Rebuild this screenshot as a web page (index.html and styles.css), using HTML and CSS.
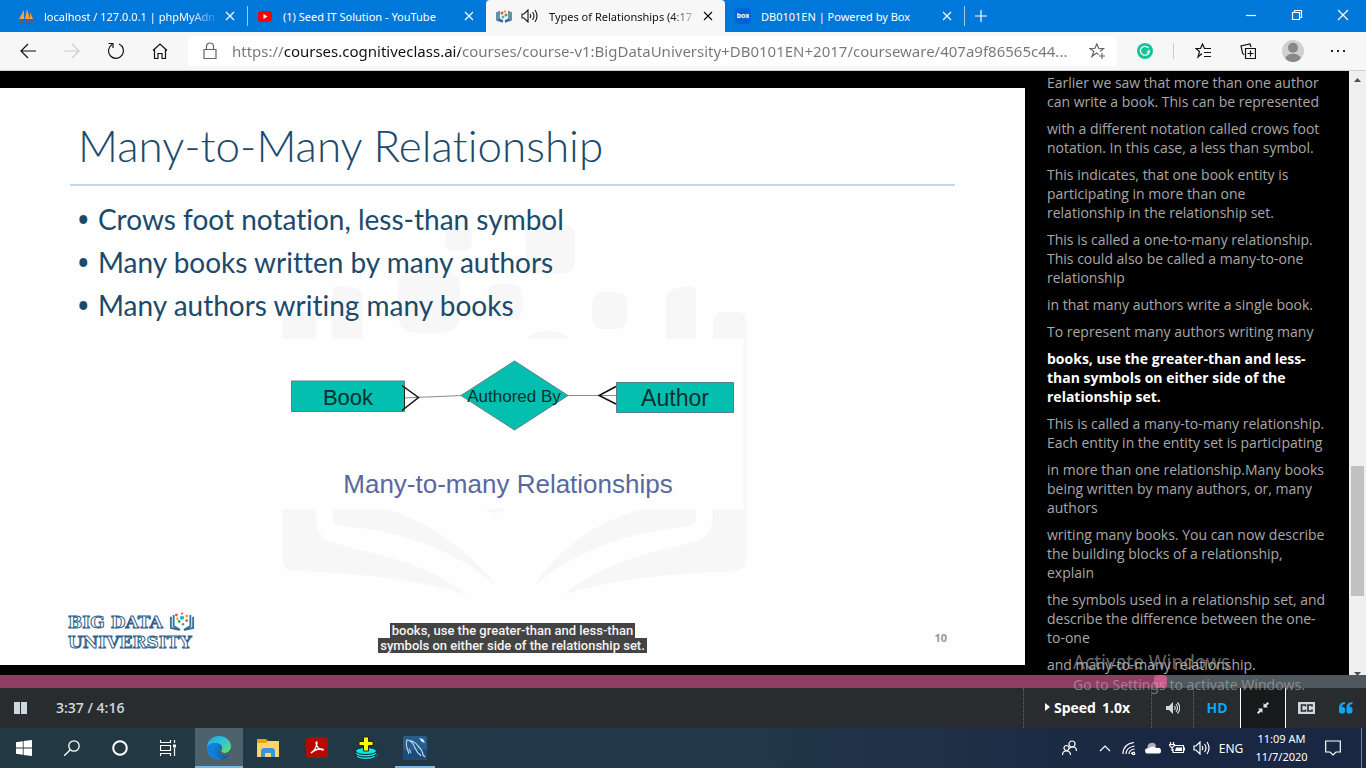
FILE: index.html
```html
<!DOCTYPE html>
<html lang="en">
<head>
<meta charset="utf-8">
<title>Types of Relationships (4:17)</title>
<link rel="stylesheet" href="styles.css">
</head>
<body>
<header class="tabstrip">
  <div class="tab">
    <svg class="favicon" viewBox="0 0 16 16" width="16" height="16"><path d="M1 11 6 2v9zM7 11 9 1l3 10zM12 11V4l3 7z" fill="#f5a33a"/><path d="M1 12.500h14M1.500 14.500h13" stroke="#565a86" stroke-width="1.500" stroke-dasharray="2 1" fill="none"/></svg>
    <button class="tab-title fade">localhost / 127.0.0.1 | phpMyAdn</button>
    <button class="tab-close" aria-label="Close tab"><svg viewBox="0 0 10 10" width="10" height="10"><path d="M1 1l8 8M9 1l-8 8"/></svg></button>
  </div>
  <div class="tab divided">
    <svg class="favicon" viewBox="0 0 16 16" width="16" height="16"><rect x="1" y="3" width="14" height="11" rx="3" fill="#f00"/><path d="M6.500 6v5l4-2.500z" fill="#fff"/></svg>
    <button class="tab-title">(1) Seed IT Solution - YouTube</button>
    <button class="tab-close" aria-label="Close tab"><svg viewBox="0 0 10 10" width="10" height="10"><path d="M1 1l8 8M9 1l-8 8"/></svg></button>
  </div>
  <div class="tab active">
    <svg class="favicon" viewBox="0 0 16 16" width="16" height="16"><path d="M1 4v8l6 2M15 4v8l-6 2M3 3v8l4 2M13 3v8l-4 2" stroke="#3a6f92" stroke-width="1.500" fill="none"/><circle cx="6" cy="5" r="1.500" fill="#e2574c"/><circle cx="9" cy="3.500" r="1.300" fill="#f0a33a"/><circle cx="10" cy="7" r="1.500" fill="#45a85c"/><circle cx="7" cy="9" r="1.500" fill="#3fb6c8"/></svg>
    <svg class="sound" viewBox="0 0 18 14" width="18" height="14"><path d="M1 5h2l4-4v12l-4-4H1zM9 5q1.500 2 0 4M11.500 3q3 4 0 8M14 1q4 6 0 12" fill="none" stroke="#222" stroke-width="1.200"/></svg>
    <button class="tab-title fade">Types of Relationships (4:17</button>
    <button class="tab-close" aria-label="Close tab"><svg viewBox="0 0 10 10" width="10" height="10"><path d="M1 1l8 8M9 1l-8 8"/></svg></button>
  </div>
  <div class="tab">
    <span class="favicon box">box</span>
    <button class="tab-title">DB0101EN | Powered by Box</button>
    <button class="tab-close" aria-label="Close tab"><svg viewBox="0 0 10 10" width="10" height="10"><path d="M1 1l8 8M9 1l-8 8"/></svg></button>
  </div>
  <button class="new-tab divided" aria-label="New tab"><svg viewBox="0 0 14 14" width="14" height="14"><path d="M7 1v12M1 7h12"/></svg></button>
  <div class="window-buttons">
    <button aria-label="Minimize"><svg viewBox="0 0 12 12" width="12" height="12"><path d="M1 6.500h10"/></svg></button>
    <button aria-label="Restore"><svg viewBox="0 0 12 12" width="12" height="12"><path d="M1.500 3.500h7v7h-7zM3.500 3V1.500h7v7H9"/></svg></button>
    <button aria-label="Close window"><svg viewBox="0 0 12 12" width="12" height="12"><path d="M1 1l10 10M11 1L1 11"/></svg></button>
  </div>
</header>

<nav class="toolbar">
  <div class="nav-buttons">
    <button aria-label="Back"><svg viewBox="0 0 16 16" width="16" height="16"><path d="M16 8H1M8 1 1 8l7 7"/></svg></button>
    <button class="disabled" aria-label="Forward" disabled><svg viewBox="0 0 16 16" width="16" height="16"><path d="M0 8h15M8 1l7 7-7 7"/></svg></button>
    <button aria-label="Reload"><svg viewBox="0 0 18 18" width="18" height="18"><path d="M5 2.500A7.500 7.500 0 1 0 12 2M1.500 1.500H6V6"/></svg></button>
    <button aria-label="Home"><svg viewBox="0 0 16 16" width="16" height="16"><path d="M1 7.500 8 1l7 6.500M2.500 6.500v9H6v-5h4v5h3.500v-9"/></svg></button>
  </div>
  <div class="address">
    <svg class="lock" viewBox="0 0 14 18" width="14" height="18"><path d="M1 7.500h12v9H1zM3.500 7V4.500a3.500 3.500 0 0 1 7 0V7"/></svg>
    <input class="url" type="text" aria-label="Address" value="https://courses.cognitiveclass.ai/courses/course-v1:BigDataUniversity+DB0101EN+2017/courseware/407a9f86565c44...">
    <button class="star" aria-label="Add to favorites"><svg viewBox="0 0 17 16" width="17" height="16"><path d="M9.500 11.500 7.500 10 3 13.500 4.800 8.500 1 5.500h4.800l2-4.500 2 4.500h4.700L11 8.500M10 13h6M13 10v6"/></svg></button>
  </div>
  <div class="toolbar-actions">
    <button aria-label="Grammarly"><svg viewBox="0 0 16 16" width="16" height="16"><circle cx="8" cy="8" r="8" fill="#15c39a" stroke="none"/><path d="M11.500 5A4.500 4.500 0 1 0 12.300 9H9.500M12 6.500V9" stroke="#fff" stroke-width="1.500"/></svg></button>
    <button class="split" aria-label="Favorites"><svg viewBox="0 0 17 16" width="17" height="16"><path d="M7 10.500 3 14l1.500-5.500L1 5.500h4.500L7.500 1l2 4.500H16M9 9.500h7M9 13.500h7"/></svg></button>
    <button aria-label="Collections"><svg viewBox="0 0 16 16" width="16" height="16"><path d="M5.500 5.500h10v10h-10zM10.500 7.500v6M7.500 10.500h6M4 12 2.500 10 1 3l9-2 1 3"/></svg></button>
    <button aria-label="Profile"><svg viewBox="0 0 24 24" width="22" height="22"><circle cx="12" cy="12" r="12" fill="#d2d0ce" stroke="none"/><circle cx="12" cy="8.500" r="5.500" fill="#8a8886" stroke="none"/><path d="M3.500 20q2-5 8.500-5t8.500 5q-3 4-8.500 4t-8.500-4z" fill="#8a8886" stroke="none"/></svg></button>
    <button aria-label="Settings and more"><svg viewBox="0 0 16 4" width="16" height="4"><path d="M1 1h2v2H1zM7 1h2v2H7zM13 1h2v2h-2z" fill="#222" stroke="none"/></svg></button>
  </div>
</nav>

<main class="player">
  <section class="stage">
    <article class="slide">
      <svg class="watermark" viewBox="0 0 1500 1200" width="500" height="400" aria-hidden="true">
        <g fill="#f7f7f7">
          <rect x="527" y="45" width="78" height="78" rx="22"/><rect x="768" y="43" width="147" height="148" rx="34"/><rect x="384" y="180" width="186" height="188" rx="50"/><rect x="652" y="223" width="103" height="105" rx="25"/><rect x="966" y="247" width="106" height="110" rx="34"/>
          <path d="M38 387V320q0-12 25-14h50q24 4 24 20v61zM187 387V245q0-17 20-16l45 5q25 5 25 20v133zM1188 387V262q2-20 28-26l42-8q20 0 20 17v142zM1330 387v-54q4-24 26-27l47-1q24 3 24 27v565h-7V387zM770 387q20-24 65-24t62 24zM645 897h60q-15 12-30 12t-30-12z"/>
          <path d="M38 894h99v30q4 68 60 76 35 12 90 24 190 42 305 130-200-62-525-72-29-5-29-30zM188 894h145q200 50 350 236Q500 970 215 948q-27-5-27-25zM1427 894h-99v30q-4 60-50 68-35 14-105 28-195 50-293 134 200-62 515-70 32-6 32-30zM1278 894h-145q-220 52-343 235 170-150 460-180 28-6 28-28z"/>
        </g>
      </svg>
      <h1 class="slide-title">Many-to-Many Relationship</h1>
      <ul class="bullets">
        <li>Crows foot notation, less-than symbol</li>
        <li>Many books written by many authors</li>
        <li>Many authors writing many books</li>
      </ul>
      <svg class="diagram" viewBox="282 339 461 170" width="461" height="170" role="img" aria-label="Book, Authored By, Author">
        <rect x="282" y="339" width="461" height="170" fill="#fefefe"/>
        <path d="M403 398 462 395.500M567 395.500h50" stroke="#8d8a9c" stroke-width="1.200"/>
        <g fill="#03bfb0" stroke="#59808a"><path d="M291.500 381h113v30.500h-113zM616.500 382.500h117v30h-117zM461 395.500 514.500 361 568 395.500 514.500 430z"/></g>
        <path d="M402 385.500 418.500 397.500 402 410.500M616 386.500 599 395.500 616 404" fill="none" stroke="#111" stroke-width="1.500"/>
        <path d="M404.500 387v21" stroke="#222"/>
        <g class="diagram-text" text-anchor="middle"><text x="348" y="405" font-size="22">Book</text><text x="514" y="402" font-size="17">Authored By</text><text x="675" y="406" font-size="23">Author</text></g>
        <text class="diagram-caption" x="508" y="493" font-size="26" text-anchor="middle">Many-to-many Relationships</text>
      </svg>
      <footer class="slide-footer">
        <div class="logo">
          <span class="logo-line">BIG DATA
          <svg viewBox="0 0 28 20" width="26" height="19"><path d="M2 5v12l9 2M5 3v12l7 4M26 5v12l-9 2M23 3v12l-7 4" stroke="#34729c" stroke-width="2" fill="none"/><g fill="#e2574c"><circle cx="8" cy="3" r="1.500"/><circle cx="14" cy="1.500" r="1.200"/><circle cx="19" cy="9" r="1.500"/></g><g fill="#f0a33a"><circle cx="19" cy="4" r="1.600"/><circle cx="9" cy="7" r="1.300"/></g><g fill="#3aa655"><circle cx="11" cy="10" r="1.500"/><circle cx="15" cy="13" r="1.300"/></g><circle cx="14" cy="6" r="2.300" fill="#30b3cf"/></svg></span>
          <span class="logo-line">UNIVERSITY</span>
        </div>
        <p class="subtitle"><span>books, use the greater-than and less-than<br>symbols on either side of the relationship set.</span></p>
        <span class="page-number">10</span>
      </footer>
    </article>
  </section>
  <aside class="transcript">
    <ol>
      <li>Earlier we saw that more than one author can write a book. This can be represented</li>
      <li>with a different notation called crows foot notation. In this case, a less than symbol.</li>
      <li>This indicates, that one book entity is participating in more than one<br>relationship in the relationship set.</li>
      <li>This is called a one-to-many relationship. This could also be called a many-to-one relationship</li>
      <li>in that many authors write a single book.</li>
      <li>To represent many authors writing many</li>
      <li class="current">books, use the greater-than and less-than symbols on either side of the relationship set.</li>
      <li>This is called a many-to-many relationship. Each entity in the entity set is participating</li>
      <li>in more than one relationship.Many books being written by many authors, or, many authors</li>
      <li>writing many books. You can now describe the building blocks of a relationship, explain</li>
      <li>the symbols used in a relationship set, and describe the difference between the one-to-one</li>
      <li>and many-to-many relationship.</li>
    </ol>
  </aside>
  <div class="scrollbar" aria-hidden="true">
    <svg viewBox="0 0 17 17" width="17" height="17"><path d="M5 11l3.500-4 3.500 4z" fill="#505050"/></svg>
    <span></span><span class="scroll-thumb"></span><span></span>
    <svg viewBox="0 0 17 17" width="17" height="17"><path d="M5 14h7l-3.500 4z" fill="#505050"/></svg>
  </div>
</main>

<input class="progress" type="range" min="0" max="1000" value="853" aria-label="Video position">

<div class="controls">
  <button class="pause" aria-label="Pause"><svg viewBox="0 0 14 12" width="14" height="12"><path d="M0 0h6v12H0zM7 0h6v12H7z" fill="#cfd8dc"/></svg></button>
  <span class="time">3:37 / 4:16</span>
  <div class="control-group">
    <button class="speed"><svg viewBox="0 0 5 8" width="5" height="8"><path d="M0 0l5 4-5 4z" fill="#fff"/></svg><span>Speed</span><span>1.0x</span></button>
    <button class="volume" aria-label="Volume"><svg viewBox="0 0 14 12" width="14" height="12"><path d="M0 4h3l4-4v12L3 8H0z" fill="#cfd8dc"/><path d="M8.500 4q1.500 2 0 4M10 2q3 4 0 8M11.500 .5q4.500 5.500 0 11" fill="none" stroke="#cfd8dc" stroke-width="1.200"/></svg></button>
    <button class="hd">HD</button>
    <button class="shrink" aria-label="Exit full browser"><svg viewBox="0 0 12 12" width="12" height="12"><path d="M6.500 5.500V1l1.500 1.500L10.500 0 12 1.500 9.500 4 11 5.500zM5.500 6.500V11L4 9.500 1.500 12 0 10.500 2.500 8 1 6.500z" fill="#dfe6e9"/></svg></button>
    <button class="cc" aria-label="Closed captions"><svg viewBox="0 0 17 12" width="17" height="12"><path d="M0 0h17v12H0z" fill="#cfd8dc"/><path d="M7.500 4.500V3H3.500v6h4V7.500M14 4.500V3h-4v6h4V7.500" fill="none" stroke="#282c2e" stroke-width="1.600"/></svg></button>
    <button class="quotes" aria-label="Transcript"><svg viewBox="0 0 14 12" width="14" height="12"><path d="M6 0v2Q3 2 3 5h1.500Q6 5.500 6 7v2.500Q6 11.500 4 11.500H2Q0 11.500 0 9.500V6Q0 0 6 0zM13.500 0v2q-3 0-3 3H12q1.500.5 1.500 2v2.500q0 2-2 2h-2q-2 0-2-2V6q0-6 6-6z" fill="#0ea5f5"/></svg></button>
  </div>
</div>

<footer class="taskbar">
  <div class="task-system">
    <button aria-label="Start"><svg viewBox="0 0 16 16" width="16" height="16"><path d="M0 2.200 6.800 1.200V7.600H0zM7.600 1.100 16 0v7.600H7.600zM0 8.400h6.800v6.400L0 13.800zM7.600 8.400H16V16l-8.400-1.100z" fill="#fff"/></svg></button>
    <button aria-label="Search"><svg viewBox="0 0 16 16" width="16" height="16"><circle cx="10" cy="6" r="5.200" fill="none" stroke="#fff" stroke-width="1.300"/><path d="M6.300 9.700 0 16" stroke="#fff" stroke-width="1.300"/></svg></button>
    <button aria-label="Cortana"><svg viewBox="0 0 16 16" width="16" height="16"><circle cx="8" cy="8" r="6.800" fill="none" stroke="#fff" stroke-width="2"/></svg></button>
    <button aria-label="Task view"><svg viewBox="0 0 17 16" width="17" height="16"><path d="M.5 0v2.500h10V0M.5 5.500h10v5H.5zM.5 16v-2.500h10V16M14.500 0v3M14.500 8v8" fill="none" stroke="#fff" stroke-width="1.200"/><path d="M13 4.500h3v3h-3z" fill="#fff"/></svg></button>
  </div>
  <div class="task-apps">
    <button class="open selected" aria-label="Microsoft Edge"><svg viewBox="0 0 24 24" width="24" height="24"><defs><linearGradient id="edgeTop" x1="0" x2="1" y1="0" y2="1"><stop offset="0" stop-color="#1fa8dd"/><stop offset=".55" stop-color="#37c6d0"/><stop offset="1" stop-color="#6ee04c"/></linearGradient><linearGradient id="edgeLow" x1="0" x2="1"><stop offset="0" stop-color="#1391e0"/><stop offset="1" stop-color="#0a4fa0"/></linearGradient></defs><circle cx="12" cy="12" r="12" fill="url(#edgeLow)"/><path d="M0 11C1 4 6 0 12 0c7 0 12 5 12 10.500 0 4-3 6.500-6.500 6.500-3 0-4-1.500-3-3C17 10 13 7 8.500 7 4.500 7 1.500 8.500 0 11z" fill="url(#edgeTop)"/><path d="M14.500 14C13.500 15.500 14.500 17 17.500 17c2 0 4.500-.5 5.800-2l.7 2-1.800 1.800q-3 1.500-6 .7-4.200-1.500-4.200-5 .5-2 1.500-3.500 1.500 1.500 1 3z" fill="#4d626a"/><path d="M0 12q2-5 8.500-5 2.500 0 4 2-5 1-5 6 0 6 7 8.700Q3 25 0 12z" fill="#1180d8"/></svg></button>
    <button aria-label="File Explorer"><svg viewBox="0 0 22 18" width="22" height="18"><path d="M0 0h9l2 2h11v16H0z" fill="#e5a50a"/><path d="M0 4h9l2-2h11v16H0z" fill="#ffd56b"/><path d="M4 18v-7l2-2h10l2 2v7h-4v-4H8v4z" fill="#3a93dc"/></svg></button>
    <button aria-label="Acrobat Reader"><svg viewBox="0 0 22 22" width="22" height="22"><rect width="22" height="21" rx="4" fill="#b30b00"/><path d="M5 16q5-3 6-10 0-2-1 0 1 6 7 7 1-1-2-1-6 0-10 4z" fill="none" stroke="#fff" stroke-width="1.300"/></svg></button>
    <button aria-label="Database tool"><svg viewBox="0 0 24 24" width="24" height="24"><ellipse cx="15" cy="19" rx="9" ry="4.500" fill="#555"/><g fill="#12e5e5" stroke="#052a2d"><ellipse cx="12" cy="20" rx="10" ry="3.500"/><ellipse cx="12" cy="17.500" rx="10.500" ry="3.500"/><ellipse cx="12" cy="15" rx="10.500" ry="3.500"/></g><path d="M9.500 1h5v4.500H19v4h-4.500V15h-5V9.500H5v-4h4.500z" fill="#ff0" stroke="#222"/></svg></button>
    <button class="open" aria-label="MySQL Workbench"><svg viewBox="0 0 24 24" width="24" height="24"><rect width="24" height="24" rx="2" fill="#245e8e"/><path d="M0 14h24v10H0z" fill="#1b4c7a"/><path d="M6 18Q2 8 4 4q5 0 8 8l3 5q2 1 3 3M4 4q8 1 11 6 5 5 5 9l2 2M6 13l2 4" fill="none" stroke="#bdd5e6" stroke-width="1.200"/><path d="M16 2l4 1 2 4-3-1z" fill="#dce9f2"/></svg></button>
  </div>
  <div class="tray">
    <button class="people" aria-label="People"><svg viewBox="0 0 15 16" width="15" height="16"><circle cx="10" cy="4" r="3"/><circle cx="4.500" cy="8" r="2.500"/><path d="M.5 15q0-4 4-4t4 4M7 8.500Q9 7 11 7q3.500 0 3.500 4"/></svg></button>
    <button aria-label="Show hidden icons"><svg viewBox="0 0 12 8" width="12" height="8"><path d="M1 7l5-5 5 5"/></svg></button>
    <button aria-label="Network"><svg viewBox="0 0 14 14" width="14" height="14"><path d="M1 13Q1 3 12 1.500M4 13q0-6.500 8.500-8M7 13q0-4 5.500-5M9.500 13q0-1.500 3-2"/><circle cx="11.500" cy="12.500" r="1.200" fill="#fff" stroke="none"/></svg></button>
    <button aria-label="OneDrive"><svg viewBox="0 0 16 12" width="16" height="12"><path d="M3 8q-2-6 3-7 4-1 5 3l-4 5z" fill="#b5bbc5" stroke="none"/><path d="M2 11.500Q0 11 0 8.500T4 6q3-2 6-1 1 1 1.500 1Q16 5 16 9q0 2.500-2 2.500z" fill="#fff" stroke="none"/></svg></button>
    <button aria-label="Battery"><svg viewBox="0 0 16 12" width="16" height="12"><path d="M6 3.500h8.500v7H4V7M1.500 0v2.500M4.500 0v2.500M.5 2.500h5v1L3 6 .5 3.500zM3 6v3"/><path d="M7 5.500h6v3.500H6zM15 5.500h1v3h-1z" fill="#fff" stroke="none"/></svg></button>
    <button aria-label="Volume level"><svg viewBox="0 0 17 14" width="17" height="14"><path d="M1 5h2l4-4v12L3 9H1zM9 5q1.500 2 0 4M11.500 3q3 4 0 8M14 1q4 6 0 12"/></svg></button>
    <button class="lang">ENG</button>
    <button class="clock"><span>11:09 AM</span><span>11/7/2020</span></button>
    <button class="notifications" aria-label="Notifications"><svg viewBox="0 0 16 16" width="16" height="16"><path d="M.7 1h14.600v11h-4.300L8 15l-3-3H.7z"/></svg></button>
  </div>
</footer>

<div class="activation">
  <p class="activation-title">Activate Windows</p>
  <p class="activation-text">Go to Settings to activate Windows.</p>
</div>
</body>
</html>
```
FILE: styles.css
```css
* { box-sizing: border-box; }
body {
  margin: 0;
  height: 100vh;
  display: flex;
  flex-direction: column;
  overflow: hidden;
  background: #000;
  font-family: "Open Sans", "Noto Sans", sans-serif;
  font-size: 12px;
}
button {
  margin: 0;
  padding: 0;
  border: 0;
  background: none;
  color: inherit;
  font: inherit;
  display: flex;
  align-items: center;
  justify-content: center;
}
svg { display: block; flex: none; }
p, ol, ul, h1 { margin: 0; padding: 0; }

/* tab strip */
.tabstrip {
  display: flex;
  height: 32px;
  flex: none;
  padding-left: 8px;
  background: #0078d9;
  color: #fff;
  font-family: "Noto Sans", sans-serif;
  font-size: 11px;
}
.tab {
  width: 239px;
  display: flex;
  align-items: center;
  padding: 0 10px;
}
.tab.active {
  background: #f7f7f7;
  color: #111;
  border-radius: 4px 4px 0 0;
}
.divided {
  background: linear-gradient(#9ccbf2, #9ccbf2) left center / 1px 20px no-repeat;
}
.favicon { width: 16px; flex: none; }
.favicon.box {
  height: 16px;
  border-radius: 3px;
  background: #0061d5;
  font-size: 7px;
  font-weight: 700;
  line-height: 15px;
  text-align: center;
}
.sound { margin-left: 9px; }
.tab-title {
  flex: 1;
  min-width: 0;
  margin: 0 2px 0 10px;
  justify-content: flex-start;
  white-space: nowrap;
}
.fade { mask-image: linear-gradient(90deg, #000 82%, transparent); }
.tab-close { width: 14px; height: 20px; }
.tab-close path, .new-tab path, .window-buttons path {
  fill: none;
  stroke: currentColor;
  stroke-width: 1.2;
}
.new-tab { width: 33px; }
.window-buttons { display: flex; margin-left: auto; padding-bottom: 3px; }
.window-buttons button { width: 46px; }

/* toolbar */
.toolbar {
  display: flex;
  height: 39px;
  flex: none;
  align-items: center;
  padding: 0 6px;
  background: #f7f7f7;
  border-bottom: 1px solid #d0d0d0;
}
.nav-buttons, .toolbar-actions { display: flex; align-items: center; }
.nav-buttons button { width: 44px; height: 32px; }
.toolbar path { fill: none; stroke: #111; stroke-width: 1.2; }
.toolbar .disabled path { stroke: #ccc; }
.address {
  flex: 1;
  display: flex;
  align-items: center;
  height: 30px;
  margin-left: 6px;
  padding: 0 10px 0 15px;
  border-radius: 3px;
  background: #fff;
}
.toolbar .address path { stroke: #666; }
.url {
  flex: 1;
  min-width: 0;
  margin-left: 15px;
  padding: 0;
  border: 0;
  outline: 0;
  font: 15px "Noto Sans", sans-serif;
  color: transparent;
  background: linear-gradient(90deg, #767676 52px, #111 52px, #111 228px, #767676 228px);
  background-clip: text;
  -webkit-background-clip: text;
}
.star { width: 20px; height: 24px; }
.toolbar-actions button { width: 45px; }
.toolbar-actions button:first-child { width: 56px; }
.toolbar-actions .split {
  width: 52px;
  height: 16px;
  padding-left: 7px;
  border-left: 1px solid #ccc;
}
.toolbar-actions [aria-label="Grammarly"] path { stroke: #fff; }
.toolbar-actions [aria-label="Profile"] path { fill: #8a8886; stroke: none; }
.toolbar-actions [aria-label="Settings and more"] path { fill: #222; stroke: none; }

/* video and transcript */
.player { flex: 1; min-height: 0; display: flex; }
.stage {
  flex: 1;
  min-width: 0;
  display: flex;
  padding: 17px 0 10px;
}
.slide {
  position: relative;
  flex: 1;
  display: flex;
  flex-direction: column;
  padding-top: 27px;
  background: #fefefe;
  color: #1b4a6b;
  font-family: Lato, "Open Sans", sans-serif;
  font-variant-ligatures: none;
}
.slide > * { position: relative; }
.slide .watermark { position: absolute; left: 270px; top: 122px; }
.slide-title {
  margin: 0 70px;
  padding: 0 0 9px 8px;
  border-bottom: 2px solid #c4d7e6;
  font-size: 44px;
  font-weight: 300;
  line-height: 60px;
}
.bullets {
  margin: 12px 0 0 98px;
  font-size: 28px;
  line-height: 43px;
  list-style: none;
}
.bullets li::before {
  content: "•";
  display: inline-block;
  width: 20px;
  margin-left: -20px;
  font-family: "Open Sans", sans-serif;
  font-weight: 700;
  line-height: 1;
}
.diagram { margin: 12px 0 0 282px; }
.diagram-text, .diagram-caption { font-family: "Liberation Sans", Arial, sans-serif; }
.diagram-text { fill: #0c302e; }
.diagram-caption { fill: #5868a0; }
.slide-footer {
  margin-top: auto;
  display: grid;
  grid-template-columns: 1fr auto 1fr;
  align-items: end;
  padding: 0 68px 12px;
}
.logo {
  display: flex;
  flex-direction: column;
  padding-bottom: 1px;
  font: bold 17px/20px "DejaVu Serif", serif;
  color: #fff;
  -webkit-text-stroke: 1px #2f608a;
}
.logo-line { display: flex; gap: 6px; white-space: nowrap; }
.subtitle {
  text-align: center;
  font: 500 13px/15px Roboto, sans-serif;
  color: #f4f4f4;
}
.subtitle span {
  padding: 0 2px;
  background: #444;
  box-decoration-break: clone;
  -webkit-box-decoration-break: clone;
}
.page-number {
  justify-self: end;
  padding: 0 10px 7px 0;
  font: bold 11px/16px "Open Sans", sans-serif;
  color: #999;
}
.transcript {
  width: 324px;
  flex: none;
  overflow: hidden;
  padding: 2px 22px 0;
  color: #a8a8a8;
  font-size: 14px;
  line-height: 19px;
}
.transcript ol { list-style: none; }
.transcript li { margin-bottom: 8px; }
.transcript .current { color: #fff; font-weight: 700; }
.scrollbar {
  width: 17px;
  flex: none;
  display: grid;
  grid-template-rows: 17px 378fr 130fr 62fr 17px;
  background: #f0f0f0;
}
.scroll-thumb { margin: 0 2px; background: #c1c1c1; }

/* player controls */
.progress {
  appearance: none;
  -webkit-appearance: none;
  flex: none;
  width: 100%;
  height: 13px;
  margin: 0;
  background: linear-gradient(90deg, #8f3e63 85%, #4f595d 85%);
}
.progress::-webkit-slider-thumb {
  -webkit-appearance: none;
  width: 13px;
  height: 13px;
  border-radius: 4px;
  background: #cb598d;
}
.controls {
  flex: none;
  display: flex;
  height: 40px;
  align-items: center;
  background: #282c2e;
  color: #cfd8dc;
  font-size: 14px;
  font-weight: 600;
}
.pause { width: 42px; height: 40px; }
.time { margin-left: 14px; padding-bottom: 2px; }
.control-group { display: flex; height: 40px; margin-left: auto; }
.control-group button { border-left: 1px dotted #666; }
.control-group .speed, .control-group .hd { padding-bottom: 2px; font-weight: 700; }
.speed { width: 128px; gap: 4px; color: #fff; }
.speed span + span { margin-left: 2px; }
.volume { width: 42px; }
.hd { width: 47px; color: #0ea5f5; }
.control-group .shrink { width: 46px; border: 1px solid #fff; border-width: 0 1px; background: #171a1b; }
.control-group .cc { width: 40px; border: 0; }
.control-group .quotes { width: 40px; border: 0; }

/* taskbar */
.taskbar {
  flex: none;
  display: flex;
  height: 40px;
  background: linear-gradient(90deg, #223942, #22374a 55%, #1a2742 85%);
  color: #fff;
  font-family: "Noto Sans", sans-serif;
}
.task-system, .task-apps, .tray { display: flex; }
.task-system button, .task-apps button { width: 48px; height: 40px; }
.task-apps { margin-left: 3px; gap: 1px; }
.task-apps .open { background: linear-gradient(#76b9ed, #76b9ed) center bottom / 40px 2px no-repeat; }
.task-apps .selected { background-color: #4d626a; background-size: 48px 2px; }
.tray { margin-left: auto; }
.tray button { width: 24px; }
.tray .people { width: 48px; }
.tray .lang { width: 36px; }
.tray .clock {
  width: 65px;
  flex-direction: column;
  font-size: 11px;
  line-height: 18px;
}
.tray .notifications {
  width: 48px;
  margin-right: 4px;
  padding-right: 9px;
  border-right: 1px solid #7b8496;
}
.tray path, .tray circle { fill: none; stroke: #fff; stroke-width: 1.2; }
.tray [aria-label="OneDrive"] path { fill: #fff; stroke: none; }
.tray [aria-label="OneDrive"] path:first-child { fill: #aab1bd; }
.tray [aria-label="Battery"] path:last-child { fill: #fff; stroke: none; }

/* system notice floating over the desktop */
.activation {
  position: absolute;
  left: 1073px;
  top: 650px;
  color: rgba(175, 175, 175, .6);
  font-family: "Noto Sans", sans-serif;
  pointer-events: none;
}
.activation-title { font-size: 19px; line-height: 24px; }
.activation-text { font-size: 14px; line-height: 22px; }
```
